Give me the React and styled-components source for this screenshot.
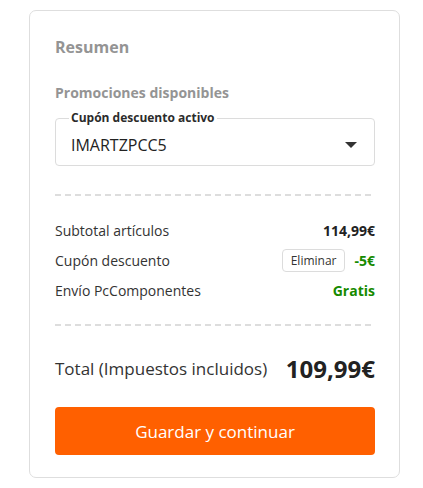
import React, { useState } from 'react';
import styled, { createGlobalStyle } from 'styled-components';

const GlobalStyle = createGlobalStyle`
    html, body {
        margin: 0;
        padding: 0;
        background: #ffffff;
        font-family: "Open Sans", "Noto Sans", "Liberation Sans", sans-serif;
        color: #333333;
    }
    * {
        box-sizing: border-box;
    }
`;

const Card = styled.section`
    width: 371px;
    margin: 10px 0 0 29px;
    padding: 24px 24px 22px 25px;
    background: #ffffff;
    border: 1px solid #dedede;
    border-radius: 7px;
`;

const Title = styled.h2`
    margin: 0;
    font-size: 16px;
    line-height: 24px;
    font-weight: 700;
    color: #949494;
`;

const SubTitle = styled.h3`
    margin: 24px 0 0;
    font-size: 14px;
    line-height: 20px;
    font-weight: 700;
    color: #949494;
`;

const Field = styled.fieldset`
    position: relative;
    margin: 7px 0 0;
    padding: 0 13px 8px;
    min-width: 0;
    border: 1px solid #dcdcdc;
    border-radius: 4px;
    cursor: pointer;
`;

const Legend = styled.legend`
    padding: 0 2px;
    font-size: 12px;
    line-height: 16px;
    font-weight: 700;
    color: #2b2b2b;
`;

const SelectRow = styled.div`
    display: flex;
    align-items: center;
    justify-content: space-between;
    padding: 7px 4px 0 2px;
`;

const Value = styled.span`
    font-size: 16px;
    line-height: 24px;
    color: #222222;
`;

const Caret = styled.svg`
    display: block;
    width: 12px;
    height: 6px;
    fill: #333333;
`;

const Divider = styled.hr`
    margin: ${p => p.top}px 0 0;
    height: 2px;
    border: 0;
    background: repeating-linear-gradient(90deg, #dddddd 0 6px, transparent 6px 10px);
`;

const Lines = styled.div`
    display: flex;
    flex-direction: column;
    margin: 19px 0 19px;
`;

const Line = styled.div`
    display: flex;
    align-items: center;
    justify-content: space-between;
    height: 30px;
    font-size: 14px;
`;

const Label = styled.span`
    color: #333333;
`;

const Amount = styled.span`
    display: flex;
    align-items: center;
    gap: 9px;
    font-weight: 700;
    color: ${p => (p.green ? '#168a00' : '#222222')};
`;

const SmallButton = styled.button`
    height: 23px;
    padding: 0 8px;
    font-family: inherit;
    font-size: 12px;
    font-weight: 400;
    color: #333333;
    background: #ffffff;
    border: 1px solid #dcdcdc;
    border-radius: 4px;
    cursor: pointer;
`;

const TotalRow = styled.div`
    display: flex;
    align-items: center;
    justify-content: space-between;
    height: 40px;
    margin-top: 22px;
`;

const TotalLabel = styled.span`
    font-size: 17px;
    color: #333333;
`;

const TotalPrice = styled.span`
    font-size: 24px;
    font-weight: 700;
    color: #222222;
`;

const MainButton = styled.button`
    display: block;
    width: 100%;
    height: 48px;
    margin-top: 19px;
    font-family: inherit;
    font-size: 17px;
    color: #ffffff;
    background: #ff6000;
    border: 0;
    border-radius: 4px;
    cursor: pointer;
`;

const App = () => {
    const [coupon, setCoupon] = useState(true);

    return (
        <>
            <GlobalStyle />
            <Card>
                <Title>Resumen</Title>
                <SubTitle>Promociones disponibles</SubTitle>

                <Field>
                    <Legend>Cupón descuento activo</Legend>
                    <SelectRow>
                        <Value>IMARTZPCC5</Value>
                        <Caret viewBox="0 0 12 6">
                            <path d="M0 0h12L6 6z" />
                        </Caret>
                    </SelectRow>
                </Field>

                <Divider top={28} />

                <Lines>
                    <Line>
                        <Label>Subtotal artículos</Label>
                        <Amount>114,99€</Amount>
                    </Line>
                    {coupon && (
                        <Line>
                            <Label>Cupón descuento</Label>
                            <Amount green>
                                <SmallButton type="button" onClick={() => setCoupon(false)}>
                                    Eliminar
                                </SmallButton>
                                -5€
                            </Amount>
                        </Line>
                    )}
                    <Line>
                        <Label>Envío PcComponentes</Label>
                        <Amount green>Gratis</Amount>
                    </Line>
                </Lines>

                <Divider top={0} />

                <TotalRow>
                    <TotalLabel>Total (Impuestos incluidos)</TotalLabel>
                    <TotalPrice>{coupon ? '109,99€' : '114,99€'}</TotalPrice>
                </TotalRow>

                <MainButton type="button">Guardar y continuar</MainButton>
            </Card>
        </>
    );
};

export default App;
